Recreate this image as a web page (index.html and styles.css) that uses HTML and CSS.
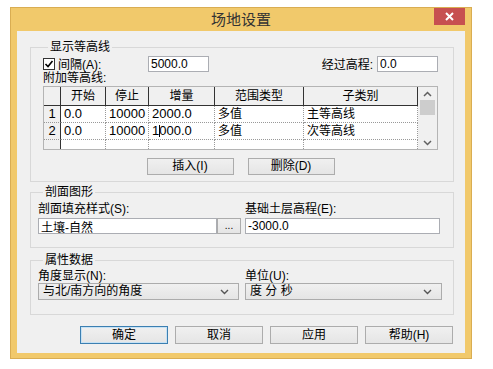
FILE: index.html
```html
<!DOCTYPE html>
<html lang="zh-CN">
<head>
    <meta charset="UTF-8">
    <title>场地设置</title>
    <link rel="stylesheet" href="styles.css">
</head>
<body>
    <div class="window">
        <div class="titlebar">
            <span></span>
            <div class="title">场地设置</div>
            <button class="close" type="button">
                <svg width="9" height="9" viewBox="0 0 9 9"><path d="M1 1L8 8M8 1L1 8" stroke="#fff" stroke-width="2"/></svg>
            </button>
        </div>

        <div class="client">
            <!-- Contour display -->
            <fieldset class="group group-contour">
                <legend>显示等高线</legend>
                <div class="interval-row">
                    <label class="check">
                        <span class="checkbox">
                            <svg width="10" height="10" viewBox="0 0 10 10"><path d="M1.5 5L4 7.5L8.5 2" fill="none" stroke="#000" stroke-width="1.6"/></svg>
                        </span>
                        间隔(A):
                    </label>
                    <input class="field" type="text" value="5000.0">
                    <span></span>
                    <label class="pass-label">经过高程:</label>
                    <input class="field" type="text" value="0.0">
                </div>
                <div class="caption">附加等高线:</div>

                <div class="grid-box">
                    <div class="grid">
                        <div class="gh"></div>
                        <div class="gh">开始</div>
                        <div class="gh">停止</div>
                        <div class="gh">增量</div>
                        <div class="gh">范围类型</div>
                        <div class="gh">子类别</div>

                        <div class="rh num">1</div>
                        <div class="gc num">0.0</div>
                        <div class="gc num">10000</div>
                        <div class="gc num">2000.0</div>
                        <div class="gc">多值</div>
                        <div class="gc">主等高线</div>

                        <div class="rh num">2</div>
                        <div class="gc num">0.0</div>
                        <div class="gc num">10000</div>
                        <div class="gc num">1<span class="caret"></span>000.0</div>
                        <div class="gc">多值</div>
                        <div class="gc">次等高线</div>

                        <div class="rh"></div>
                        <div class="gc"></div>
                        <div class="gc"></div>
                        <div class="gc"></div>
                        <div class="gc"></div>
                        <div class="gc"></div>
                    </div>
                    <div class="vscroll">
                        <svg class="arrow" width="9" height="6" viewBox="0 0 9 6"><path d="M1 5L4.5 1.5L8 5" fill="none" stroke="#606060" stroke-width="1.5"/></svg>
                        <div class="thumb"></div>
                        <div class="track"></div>
                        <svg class="arrow" width="9" height="6" viewBox="0 0 9 6"><path d="M1 1L4.5 4.5L8 1" fill="none" stroke="#606060" stroke-width="1.5"/></svg>
                    </div>
                </div>

                <div class="grid-actions">
                    <button class="btn" type="button">插入(I)</button>
                    <button class="btn" type="button">删除(D)</button>
                </div>
            </fieldset>

            <!-- Section graphics -->
            <fieldset class="group group-section">
                <legend>剖面图形</legend>
                <div class="two-col">
                    <div class="col col-fill">
                        <div class="label">剖面填充样式(S):</div>
                        <div class="picker">
                            <input class="field" type="text" value="土壤-自然">
                            <button class="btn btn-browse" type="button">...</button>
                        </div>
                    </div>
                    <div class="col col-base">
                        <div class="label">基础土层高程(E):</div>
                        <input class="field" type="text" value="-3000.0">
                    </div>
                </div>
            </fieldset>

            <!-- Property data -->
            <fieldset class="group group-props">
                <legend>属性数据</legend>
                <div class="two-col">
                    <div class="col col-angle">
                        <div class="label">角度显示(N):</div>
                        <div class="combo">
                            <span>与北/南方向的角度</span>
                            <svg width="9" height="6" viewBox="0 0 9 6"><path d="M1 1L4.5 4.5L8 1" fill="none" stroke="#555" stroke-width="1.4"/></svg>
                        </div>
                    </div>
                    <div class="col col-unit">
                        <div class="label">单位(U):</div>
                        <div class="combo">
                            <span>度 分 秒</span>
                            <svg width="9" height="6" viewBox="0 0 9 6"><path d="M1 1L4.5 4.5L8 1" fill="none" stroke="#555" stroke-width="1.4"/></svg>
                        </div>
                    </div>
                </div>
            </fieldset>

            <div class="dialog-actions">
                <button class="btn btn-default" type="button">确定</button>
                <button class="btn" type="button">取消</button>
                <button class="btn" type="button">应用</button>
                <button class="btn" type="button">帮助(H)</button>
            </div>
        </div>
    </div>
</body>
</html>
```

FILE: styles.css
```css
body {
    margin: 0;
    background: #fff;
    font-family: "Liberation Sans", "Noto Sans CJK SC", sans-serif;
    font-size: 12px;
    color: #000;
}

.window {
    box-sizing: border-box;
    width: 462px;
    height: 352px;
    margin: 7px 0 0 10px;
    padding: 0 6px 5px;
    border: 1px solid #d9ad52;
    background: #f1c96b;
    display: flex;
    flex-direction: column;
}

.titlebar {
    height: 23px;
    display: grid;
    grid-template-columns: 1fr auto 1fr;
    align-items: start;
}

.title {
    font-size: 15px;
    line-height: 23px;
    color: #333;
    text-align: center;
}

.close {
    justify-self: end;
    width: 31px;
    height: 17px;
    padding: 0;
    border: none;
    background: #c75050;
    display: flex;
    align-items: center;
    justify-content: center;
}

.client {
    flex: 1;
    background: #f0f0f0;
    padding-top: 9px;
}

/* group boxes */
.group {
    margin: 0 11px 0 13px;
    border: 1px solid #d8d8d8;
    min-width: 0;
}

.group legend {
    margin-left: 5px;
    padding: 0 2px;
    line-height: 14px;
}

.group-contour {
    padding: 1px 15px 6px 12px;
}

.group-section {
    margin-top: 3px;
    padding: 3px 13px 13px 7px;
}

.group-props {
    margin-top: 5px;
    padding: 2px 11px 14px 7px;
}

/* inputs */
.field {
    box-sizing: border-box;
    height: 16px;
    margin: 0;
    padding: 0 2px;
    border: 1px solid #abadb3;
    background: #fff;
    font: inherit;
    font-size: 12px;
    color: #000;
    outline: none;
}

.interval-row {
    display: grid;
    grid-template-columns: 105px 61px 1fr auto 61px;
    align-items: center;
    height: 16px;
}

.check {
    display: flex;
    align-items: center;
    gap: 3px;
}

.checkbox {
    box-sizing: border-box;
    width: 12px;
    height: 12px;
    border: 1px solid #333;
    background: #fff;
    display: flex;
    align-items: center;
    justify-content: center;
}

.pass-label {
    margin-right: 4px;
}

.caption {
    line-height: 14px;
    margin-bottom: 1px;
}

/* contour grid */
.grid-box {
    box-sizing: border-box;
    width: 395px;
    height: 64px;
    border: 1px solid #b4b4b4;
    display: flex;
    overflow: hidden;
}

.grid {
    display: grid;
    grid-template-columns: 17px 45px 43px 66px 89px 114px;
    grid-template-rows: 19px 17px 17px 17px;
    width: 374px;
    flex: none;
}

.grid > div {
    box-sizing: border-box;
    white-space: nowrap;
    overflow: hidden;
}

.gh {
    background: #f0f0f0;
    border-right: 1px solid #333;
    border-bottom: 1px solid #333;
    text-align: center;
    line-height: 18px;
}

.rh {
    background: #f0f0f0;
    border-right: 1px solid #333;
    border-bottom: 1px dotted #999;
    text-align: center;
    line-height: 16px;
}

.gc {
    background: #fff;
    border-right: 1px dotted #999;
    border-bottom: 1px dotted #999;
    padding-left: 3px;
    line-height: 16px;
}

.num {
    font-size: 13px;
}

.caret {
    display: inline-block;
    width: 1px;
    height: 12px;
    margin-right: -1px;
    background: #000;
    vertical-align: -2px;
}

.vscroll {
    flex: 1;
    background: #f0f0f0;
    display: flex;
    flex-direction: column;
    align-items: center;
}

.vscroll .arrow {
    margin: 4px 0 3px;
}

.thumb {
    width: 15px;
    height: 15px;
    background: #cdcdcd;
}

.track {
    flex: 1;
}

.grid-actions {
    display: flex;
    justify-content: center;
    gap: 14px;
    margin-top: 8px;
}

/* buttons */
.btn {
    box-sizing: border-box;
    width: 87px;
    height: 17px;
    margin: 0;
    padding: 0;
    border: 1px solid #acacac;
    background: linear-gradient(#f0f0f0, #e5e5e5);
    font: inherit;
    font-size: 12px;
    line-height: 15px;
    color: #000;
}

.btn-default {
    border-color: #3c7fb1;
    box-shadow: inset 0 0 0 1px #c6e2f5;
}

.btn-browse {
    width: 24px;
    height: 16px;
    font-size: 10px;
    line-height: 12px;
}

/* two column rows */
.two-col {
    display: flex;
}

.label {
    line-height: 14px;
    margin-bottom: 2px;
}

.col-fill {
    width: 203px;
}

.col-base {
    width: 195px;
    margin-left: 4px;
}

.col-base .field {
    width: 100%;
}

.picker {
    display: flex;
}

.picker .field {
    width: 179px;
}

.col-angle {
    width: 201px;
}

.col-unit {
    width: 197px;
    margin-left: 6px;
}

.group-props .label {
    margin-bottom: 0;
}

.combo {
    box-sizing: border-box;
    height: 17px;
    padding: 0 9px 0 4px;
    border: 1px solid #acacac;
    background: linear-gradient(#f0f0f0, #e5e5e5);
    display: flex;
    align-items: center;
    justify-content: space-between;
    line-height: 15px;
}

.dialog-actions {
    display: flex;
    justify-content: flex-end;
    gap: 7px;
    margin-top: 11px;
    padding-right: 12px;
}

.dialog-actions .btn {
    width: 88px;
    height: 18px;
    line-height: 16px;
}
```
